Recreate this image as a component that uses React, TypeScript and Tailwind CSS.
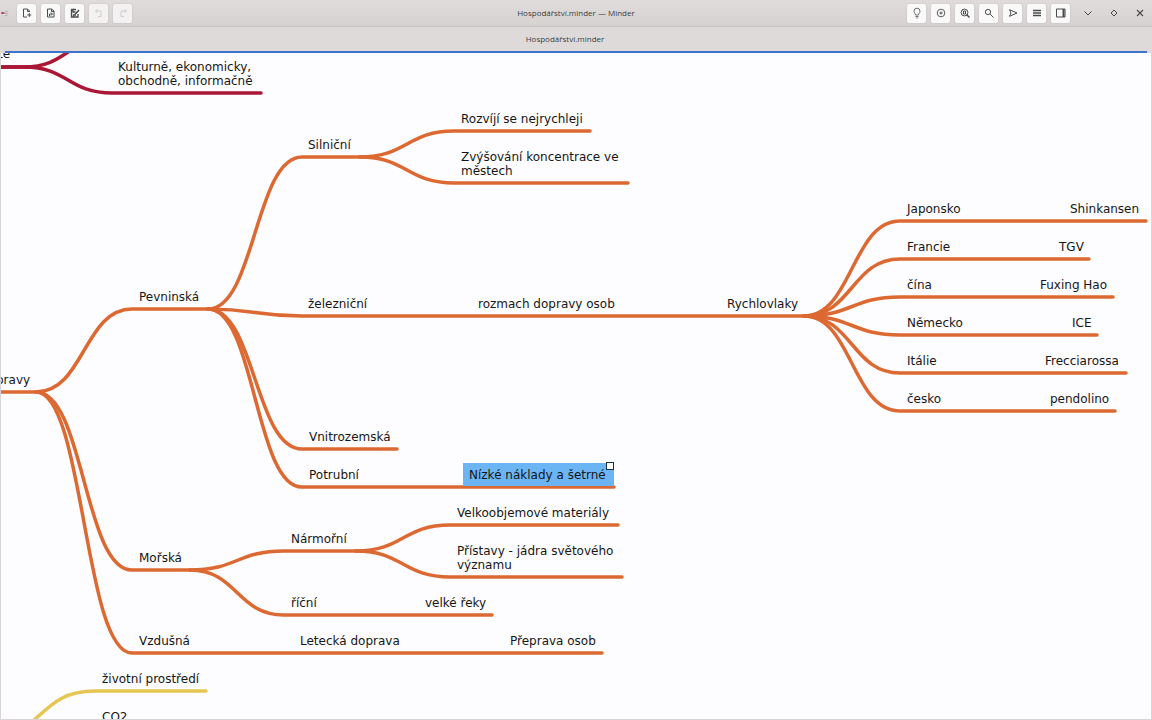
import type { ReactNode } from "react";

type Topic = { text: string; x: number; y: number; selected?: boolean };
type Branch = { d: string; color: string };

const ORANGE = "#dc6932";
const RED = "#a91636";
const YELLOW = "#e5c652";

const topics: Topic[] = [
  { text: "te", x: -3, y: -6 },
  { text: "Kulturně, ekonomicky,\nobchodně, informačně", x: 117, y: 7 },
  { text: "pravy", x: -5, y: 320 },
  { text: "Pevninská", x: 138, y: 237 },
  { text: "Silniční", x: 307, y: 85 },
  { text: "Rozvíjí se nejrychleji", x: 460, y: 59 },
  { text: "Zvýšování koncentrace ve\nměstech", x: 460, y: 97 },
  { text: "železniční", x: 307, y: 244 },
  { text: "rozmach dopravy osob", x: 477, y: 244 },
  { text: "Rychlovlaky", x: 726, y: 244 },
  { text: "Japonsko", x: 906, y: 149 },
  { text: "Shinkansen", x: 1069, y: 149 },
  { text: "Francie", x: 906, y: 187 },
  { text: "TGV", x: 1058, y: 187 },
  { text: "čína", x: 906, y: 225 },
  { text: "Fuxing Hao", x: 1039, y: 225 },
  { text: "Německo", x: 906, y: 263 },
  { text: "ICE", x: 1071, y: 263 },
  { text: "Itálie", x: 906, y: 301 },
  { text: "Frecciarossa", x: 1044, y: 301 },
  { text: "česko", x: 906, y: 339 },
  { text: "pendolino", x: 1049, y: 339 },
  { text: "Vnitrozemská", x: 308, y: 377 },
  { text: "Potrubní", x: 308, y: 415 },
  { text: "Nízké náklady a šetrné", x: 468, y: 415, selected: true },
  { text: "Velkoobjemové materiály", x: 456, y: 453 },
  { text: "Přístavy - jádra světového\nvýznamu", x: 456, y: 491 },
  { text: "Nármořní", x: 290, y: 479 },
  { text: "Mořská", x: 138, y: 498 },
  { text: "říční", x: 290, y: 543 },
  { text: "velké řeky", x: 424, y: 543 },
  { text: "Vzdušná", x: 138, y: 581 },
  { text: "Letecká doprava", x: 299, y: 581 },
  { text: "Přeprava osob", x: 509, y: 581 },
  { text: "životní prostředí", x: 101, y: 619 },
  { text: "CO2", x: 101, y: 657 },
];

const branches: Branch[] = [
  { d: "M0 14H24C68 14 68 -16 112 -16", color: RED },
  { d: "M0 14H24C68 14 68 40 112 40H261", color: RED },
  { d: "M0 339H36C84 339 84 256 132 256H208", color: ORANGE },
  { d: "M36 339C84 339 84 517 132 517H190", color: ORANGE },
  { d: "M36 339C84 339 84 600 132 600H602", color: ORANGE },
  { d: "M208 256C255 256 255 104 302 104H360", color: ORANGE },
  { d: "M208 256C255 256 255 263 302 263H804", color: ORANGE },
  { d: "M208 256C255 256 255 396 302 396H397", color: ORANGE },
  { d: "M208 256C255 256 255 434 302 434H614", color: ORANGE },
  { d: "M360 104C407 104 407 78 454 78H590", color: ORANGE },
  { d: "M360 104C407 104 407 130 454 130H628", color: ORANGE },
  { d: "M804 263C852 263 852 168 900 168H1146", color: ORANGE },
  { d: "M804 263C852 263 852 206 900 206H1089", color: ORANGE },
  { d: "M804 263C852 263 852 244 900 244H1113", color: ORANGE },
  { d: "M804 263C852 263 852 282 900 282H1097", color: ORANGE },
  { d: "M804 263C852 263 852 320 900 320H1126", color: ORANGE },
  { d: "M804 263C852 263 852 358 900 358H1115", color: ORANGE },
  { d: "M190 517C237 517 237 498 284 498H356", color: ORANGE },
  { d: "M190 517C237 517 237 562 284 562H492", color: ORANGE },
  { d: "M356 498C403 498 403 472 450 472H618", color: ORANGE },
  { d: "M356 498C403 498 403 524 450 524H622", color: ORANGE },
  { d: "M0 694C46 664 50 638 95 638H206", color: YELLOW },
];

const Icon = ({ children }: { children: ReactNode }) => (
  <svg viewBox="0 0 12 12" className="size-3" fill="none" stroke="currentColor" strokeWidth="1" aria-hidden="true">
    {children}
  </svg>
);

const ToolButton = ({ label, disabled, children }: { label: string; disabled?: boolean; children: ReactNode }) => (
  <button
    aria-label={label}
    disabled={disabled}
    className="flex size-[19px] items-center justify-center rounded-xs bg-[#faf9f9] text-[#4c4c4c] shadow-[0_0_2px_#bdb9b8] disabled:bg-[#f3f1f1] disabled:text-[#d0cdcc]"
  >
    <Icon>{children}</Icon>
  </button>
);

const WindowButton = ({ label, children }: { label: string; children: ReactNode }) => (
  <button aria-label={label} className="flex size-5 items-center justify-center text-[#4a4a4a]">
    <Icon>{children}</Icon>
  </button>
);

const HeaderBar = () => (
  <header className="grid h-[27px] grid-cols-[1fr_auto_1fr] items-center border-b border-[#c6c2c1] bg-linear-to-b from-[#dfdcdb] to-[#d5d2d1]">
    <div className="flex items-center gap-[5px]">
      <svg viewBox="0 0 12 12" className="size-3" aria-hidden="true">
        <path d="M4 6.500h3M5 4.500h3M5.500 6.500h2.500M5 8.500h2.500" stroke="#b5b0b2" strokeWidth="1" />
        <rect x="1" y="5" width="3.500" height="2" rx="1" fill="#bd4560" />
      </svg>
      <ToolButton label="New">
        <path d="M8.500 5V4l-2-2h-4v8h3.500M6.500 2v2.500h2M8.300 6v4M6.300 8h4" />
      </ToolButton>
      <ToolButton label="Open">
        <path d="M2.500 10V2h4l2.500 2v6zM6.500 2v2.500H9M4.500 9V7h2.500M6 5.500 7.500 7 6 8.500" />
      </ToolButton>
      <ToolButton label="Save">
        <path d="M7 2.500H2.500v7.500H9V7M4 2.500V5h2.500M4.500 10V8h2.500" strokeWidth="1.300" />
        <path d="M10 3 6 7.500" strokeWidth="1.500" />
      </ToolButton>
      <ToolButton label="Undo" disabled>
        <path d="M4.500 2 2.500 4l2 2M2.500 4H8v5.500H5" />
      </ToolButton>
      <ToolButton label="Redo" disabled>
        <path d="m7.500 2 2 2-2 2M9.500 4H4v5.500h3" />
      </ToolButton>
    </div>
    <h1 className="font-['Open_Sans',sans-serif] text-[8px] text-[#3d3d3d]">Hospodářství.minder — Minder</h1>
    <div className="flex items-center justify-end gap-[5px] pr-0.5">
      <ToolButton label="Focus">
        <path d="M4.500 8C4.500 6.500 3 6.200 3 4.200a3 3 0 0 1 6 0C9 6.200 7.500 6.500 7.500 8zM4.500 9.500h3M5.200 11h1.600" strokeWidth=".8" />
      </ToolButton>
      <ToolButton label="Zoom">
        <circle cx="6" cy="6" r="3.800" strokeWidth=".9" />
        <path d="M4.500 6h3M6 4.500v3" />
      </ToolButton>
      <ToolButton label="Find in map">
        <circle cx="5.500" cy="5.500" r="3.400" />
        <path d="M4.500 4h2v3h-2z" />
        <path d="m7.500 7.500 3 3" strokeWidth="1.400" />
      </ToolButton>
      <ToolButton label="Search">
        <circle cx="5" cy="5" r="2.600" />
        <path d="m7 7 3.500 3.500" />
      </ToolButton>
      <ToolButton label="Export">
        <path d="M2.500 2.700 10 6 2.500 9.300 4 6z" />
      </ToolButton>
      <ToolButton label="Menu">
        <path d="M2 3.500h8M2 6h8M2 8.500h8" strokeWidth="1.500" />
      </ToolButton>
      <ToolButton label="Sidebar">
        <path d="M1.500 2h8.500v8H1.500z" />
        <path d="M8.500 2v8" strokeWidth="2" />
      </ToolButton>
      <div className="flex items-center gap-1.5 pl-[3px]">
        <WindowButton label="Minimize"><path d="M2.500 4.500 6 8l3.500-3.500" /></WindowButton>
        <WindowButton label="Maximize"><path d="M6 3l3 3-3 3-3-3z" /></WindowButton>
        <WindowButton label="Close"><path d="m3 3 6 6M9 3 3 9" strokeWidth="1.200" /></WindowButton>
      </div>
    </div>
  </header>
);

const MindMap = () => (
  <main className="relative min-h-0 flex-1 overflow-hidden border-x border-b border-[#d8d5d4] bg-[#fdfcfe]">
    <svg className="absolute top-0 -left-px h-full w-full overflow-visible" fill="none" strokeWidth="3.5" strokeLinecap="round" aria-hidden="true">
      {branches.map((branch) => (
        <path key={branch.d} d={branch.d} stroke={branch.color} />
      ))}
    </svg>
    {topics.map((topic) => (
      <div
        key={topic.text}
        className="absolute text-[12px] leading-[14px] whitespace-pre text-[#161616]"
        style={{ left: topic.x, top: topic.y }}
      >
        {topic.selected && <span className="absolute -top-[5px] -right-2 -left-1.5 h-[23px] bg-[#6bb5f4]" />}
        <span className="relative">{topic.text}</span>
        {topic.selected && <span className="absolute -top-1.5 -right-2 size-2 border border-[#1d2f42] bg-white" />}
      </div>
    ))}
  </main>
);

const App = () => {
  return (
    <div className="flex h-screen flex-col overflow-hidden bg-[#dedad9] font-['DejaVu_Sans',sans-serif]">
      <HeaderBar />
      <nav className="flex h-[26px] items-center justify-center px-[5px]">
        <button className="h-full w-full border-b-2 border-[#3e74cb] pr-[22px] font-['Open_Sans',sans-serif] text-[8px] text-[#3d3d3d]">
          Hospodářství.minder
        </button>
      </nav>
      <MindMap />
    </div>
  );
};

export default App;
